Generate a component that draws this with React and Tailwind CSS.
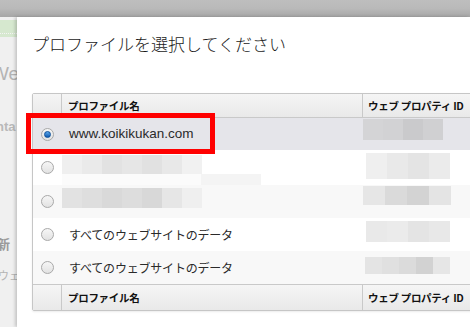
import React from "react";

const jp = { fontFamily: '"Noto Sans CJK JP", "Noto Sans", sans-serif' };
const ar = { fontFamily: '"Liberation Sans", Arial, sans-serif' };

function Radio({ checked }) {
  return (
    <div className="w-[13px] h-[13px] rounded-full border border-[#a9a9a9] bg-gradient-to-b from-[#f6f6f6] to-[#e2e2e2] flex items-center justify-center">
      {checked && (
        <div className="w-[7px] h-[7px] rounded-full bg-gradient-to-b from-[#5aa7ea] to-[#0d5ab0] border border-[#0b4f9c]" />
      )}
    </div>
  );
}

function Mosaic({ tiles, h, w }) {
  return (
    <div className="flex" style={{ height: h }}>
      {tiles.map((c, i) => (
        <div key={i} style={{ background: c, width: w }} />
      ))}
    </div>
  );
}

function HeaderRow({ h }) {
  return (
    <div
      className="grid grid-cols-[29px_301px_1fr] bg-gradient-to-b from-[#f5f5f5] to-[#e9e9e9] text-[10.5px] font-bold text-[#111] tracking-[-0.3px]"
      style={{ ...jp, height: h }}
    >
      <div className="border-r border-[#c9c9c9]" />
      <div className="border-r border-[#c9c9c9] flex items-center pl-[6px]">プロファイル名</div>
      <div className="flex items-center pl-[5px] whitespace-nowrap">ウェブ プロパティ ID</div>
    </div>
  );
}

function Row({ h, bg, checked, children, id }) {
  return (
    <div className="grid grid-cols-[29px_301px_1fr]" style={{ height: h, background: bg }}>
      <div className="flex items-center justify-center">
        <Radio checked={checked} />
      </div>
      <div className="flex items-center">{children}</div>
      <div className="flex items-center">{id}</div>
    </div>
  );
}

export default function App() {
  return (
    <div className="w-[470px] h-[327px] overflow-hidden bg-[#f1f1f1] flex flex-col">
      <div className="h-[17px] shrink-0 bg-gradient-to-b from-[#bebebe] via-[#b9b9b9] to-[#a6a6a6]" />
      <div className="flex flex-1 min-h-0">
        <div className="w-[17px] shrink-0 overflow-hidden bg-[#f0f0f0] flex flex-col" style={ar}>
          <div className="mt-[3px] h-[17px] bg-[#d6e8cf] flex items-end pb-[3px]">
            <div className="w-full border-b border-dotted border-[#f4f4f4]" />
          </div>
          <div className="mt-[27px] ml-[-9px] text-[19px] text-[#b4b4b4] leading-[20px] whitespace-nowrap">Wel</div>
          <div className="mt-[36px] ml-[-4px] text-[13px] font-bold text-[#b9b9b9] leading-[14px] whitespace-nowrap">nta</div>
          <div className="mt-[103px] ml-[-3px] text-[13px] font-bold text-[#9a9a9a] leading-[14px]" style={jp}>新</div>
          <div className="mt-[18px] ml-[-2px] text-[11px] text-[#b4b4b4] leading-[12px] whitespace-nowrap" style={jp}>ウェ</div>
        </div>
        <div className="flex-1 min-w-0 bg-white relative shadow-[-2px_0_3px_rgba(0,0,0,0.18)] overflow-hidden">
          <div className="pl-[15px] pt-[15px] text-[17px] leading-[24px] text-[#1a1a1a] font-light whitespace-nowrap" style={jp}>
            プロファイルを選択してください
          </div>
          <div className="ml-[15px] mt-[37px] w-[470px] border border-[#c6c6c6] rounded-[2px] shadow-[0_1px_2px_rgba(0,0,0,0.08)]">
            <div className="border-b border-[#c9c9c9]">
              <HeaderRow h={23} />
            </div>
            <Row
              h={32}
              bg="#e5e5ea"
              checked
              id={<div className="mt-[-9px]"><Mosaic h={21} w={20} tiles={["#d4d4d6", "#d2d2d4", "#cacacc", "#d0d0d2"]} /></div>}
            >
              <span className="pl-[7px] text-[13.5px] text-[#2a2a2a]" style={ar}>www.koikikukan.com</span>
            </Row>
            <Row
              h={35}
              bg="#ffffff"
              id={<div className="ml-[3px] mt-[-4px]"><Mosaic h={26} w={21} tiles={["#efefef", "#e9e9e9", "#e4e4e4", "#ebebeb"]} /></div>}
            >
              <div className="flex flex-col self-stretch pt-[5px]">
                <Mosaic h={19} w={20} tiles={["#efefef", "#eaeaea", "#e2e2e2", "#e6e6e6", "#e1e1e1", "#e8e8e8", "#f1f1f1"]} />
                <div className="flex">
                  <div className="w-[139px] h-[11px] bg-[#fbfbfb]" />
                  <div className="w-[60px] h-[11px] bg-[#f4f4f4]" />
                </div>
              </div>
            </Row>
            <Row
              h={33}
              bg="#f8f8f8"
              id={<div className="mt-[-12px]"><Mosaic h={19} w={22} tiles={["#e6e6e6", "#dadada", "#d3d3d3", "#e4e4e4"]} /></div>}
            >
              <div className="mt-[-8px]">
                <Mosaic h={20} w={20} tiles={["#e2e2e2", "#dedede", "#d9d9d9", "#dddddd", "#d8d8d8", "#e6e6e6", "#efefef"]} />
              </div>
            </Row>
            <Row
              h={33}
              bg="#ffffff"
              id={<div className="ml-[3px] mt-[-6px]"><Mosaic h={21} w={21} tiles={["#e9e9e9", "#ebebeb", "#e4e4e4", "#e8e8e8"]} /></div>}
            >
              <span className="pl-[7px] text-[12px] tracking-[-0.2px] text-[#2a2a2a]" style={jp}>すべてのウェブサイトのデータ</span>
            </Row>
            <Row
              h={33}
              bg="#f8f8f8"
              id={<div className="ml-[2px] mt-[-4px]"><Mosaic h={17} w={17} tiles={["#e4e4e4", "#e0e0e0", "#dbdbdb", "#d2d2d2", "#e6e6e6"]} /></div>}
            >
              <span className="pl-[7px] text-[12px] tracking-[-0.2px] text-[#2a2a2a]" style={jp}>すべてのウェブサイトのデータ</span>
            </Row>
            <div className="border-t border-[#c9c9c9]">
              <HeaderRow h={25} />
            </div>
          </div>
          <div className="absolute left-[9px] top-[96px] w-[189px] h-[41px] border-[5px] border-[#ff0000]" />
        </div>
      </div>
    </div>
  );
}
